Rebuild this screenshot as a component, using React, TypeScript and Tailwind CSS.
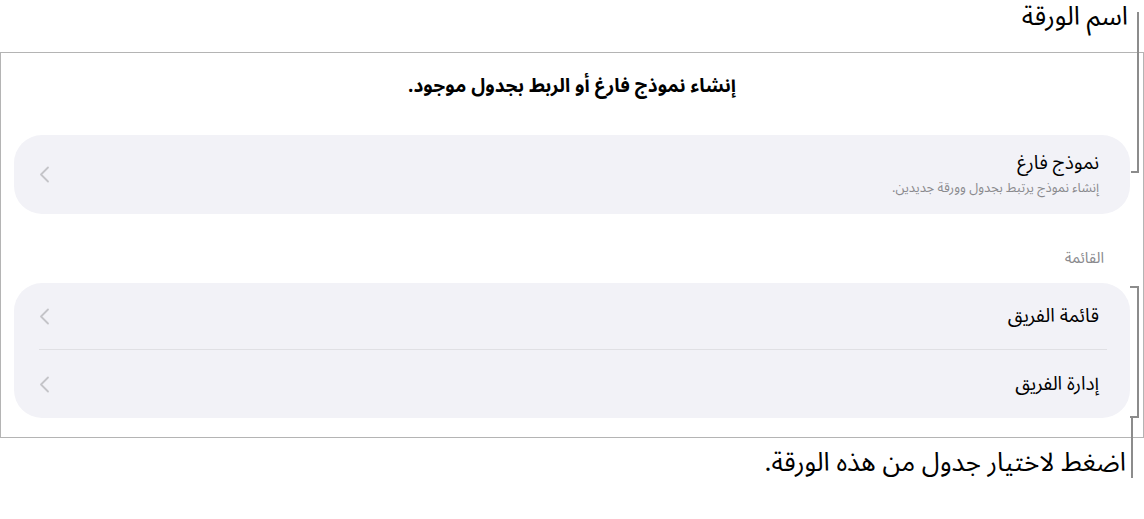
const font = { fontFamily: '"Noto Sans Arabic", "DejaVu Sans", sans-serif' };

function Chevron() {
  return (
    <svg width="11" height="17" viewBox="0 0 11 17" className="shrink-0">
      <path d="M9 1.5 L2 8.5 L9 15.5" fill="none" stroke="#c4c4c8" strokeWidth="1.8" strokeLinecap="round" strokeLinejoin="round" />
    </svg>
  );
}

function Row({ title, sub }: { title: string; sub?: string }) {
  return (
    <div className="flex items-center justify-between pr-[31px] pl-[25px]">
      <div className="flex flex-col gap-[1px]">
        <span className="text-[19px] leading-[26px] text-black">{title}</span>
        {sub && <span className="text-[13px] leading-[22px] text-[#8a8a8e]">{sub}</span>}
      </div>
      <Chevron />
    </div>
  );
}

export default function App() {
  return (
    <div dir="rtl" style={font} className="relative h-[519px] w-[1144px] overflow-hidden bg-white">
      {/* top callout */}
      <div className="flex h-[52px] items-start pr-[16px]">
        <span className="text-[26px] leading-[34px] text-black">اسم الورقة</span>
      </div>

      {/* sheet frame */}
      <div className="flex h-[386px] flex-col border border-[#b4b4b4] px-[13px]">
        <div className="flex h-[82px] items-start justify-center pt-[19px]">
          <span className="text-[19px] font-bold leading-[28px] text-black">إنشاء نموذج فارغ أو الربط بجدول موجود.</span>
        </div>

        <div className="flex h-[79px] flex-col justify-center rounded-[28px] bg-[#f2f2f7]">
          <Row title="نموذج فارغ" sub="إنشاء نموذج يرتبط بجدول وورقة جديدين." />
        </div>

        <div className="flex h-[69px] items-center pr-[26px] pt-[20px]">
          <span className="text-[15px] text-[#8a8a8e]">القائمة</span>
        </div>

        <div className="flex h-[135px] flex-col rounded-[28px] bg-[#f2f2f7]">
          <div className="flex h-[66px] flex-col justify-center">
            <Row title="قائمة الفريق" />
          </div>
          <div className="mr-[23px] ml-[25px] h-px bg-[#e0e0e4]" />
          <div className="flex h-[68px] flex-col justify-center">
            <Row title="إدارة الفريق" />
          </div>
        </div>
      </div>

      {/* bottom callout */}
      <div className="flex pr-[18px] pt-[7px]">
        <span className="text-[26px] leading-[36px] text-black">اضغط لاختيار جدول من هذه الورقة.</span>
      </div>

      {/* leader lines */}
      <div className="absolute left-[1137px] top-[12px] h-[161px] w-[2px] bg-[#8c8c8c]" />
      <div className="absolute left-[1131px] top-[171px] h-[2px] w-[8px] bg-[#8c8c8c]" />

      <div className="absolute left-[1137px] top-[286px] h-[132px] w-[2px] bg-[#8c8c8c]" />
      <div className="absolute left-[1130px] top-[286px] h-[2px] w-[9px] bg-[#8c8c8c]" />
      <div className="absolute left-[1130px] top-[416px] h-[2px] w-[9px] bg-[#8c8c8c]" />
      <div className="absolute left-[1131px] top-[418px] h-[60px] w-[2px] bg-[#8c8c8c]" />
    </div>
  );
}
